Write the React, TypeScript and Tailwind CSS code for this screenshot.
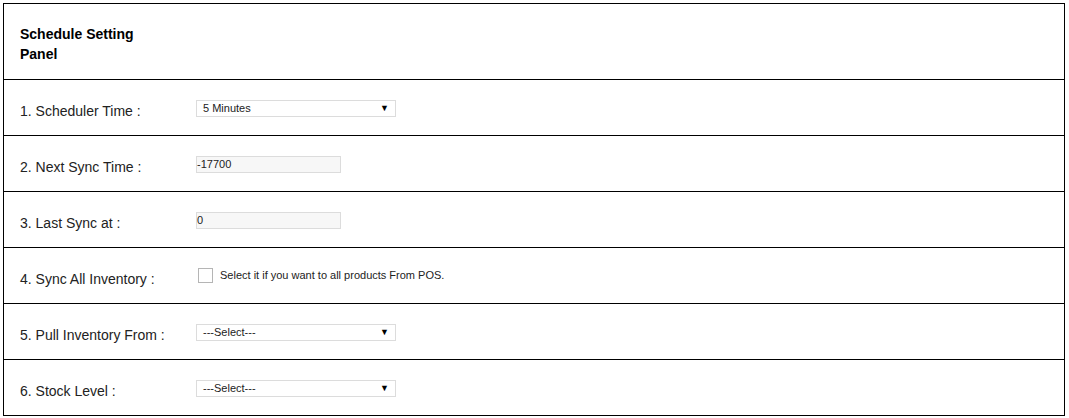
const rows = [
  { label: "1. Scheduler Time :", kind: "select", value: "5 Minutes" },
  { label: "2. Next Sync Time :", kind: "text", value: "-17700" },
  { label: "3. Last Sync at :", kind: "text", value: "0" },
  { label: "4. Sync All Inventory :", kind: "check", value: "Select it if you want to all products From POS." },
  { label: "5. Pull Inventory From :", kind: "select", value: "---Select---" },
  { label: "6. Stock Level :", kind: "select", value: "---Select---" },
];

function Field({ kind, value }: { kind: string; value: string }) {
  if (kind === "select") {
    return (
      <div className="mt-[2px] flex h-[17px] w-[200px] items-center justify-between border border-[#dcdcdc] bg-white pl-[6px] pr-[6px] text-[11px] text-[#222]">
        <span>{value}</span>
        <span className="text-[9px] leading-none text-black">▼</span>
      </div>
    );
  }
  if (kind === "text") {
    return (
      <div className="mt-[2px] flex h-[17px] w-[145px] items-center border border-[#dcdcdc] bg-[#f7f7f7] text-[11px] text-[#222]">
        {value}
      </div>
    );
  }
  return (
    <div className="flex items-center gap-[7px] pl-[2px]">
      <div className="h-[15px] w-[15px] border border-[#b5b5b5] bg-white" />
      <span className="text-[11px] text-[#222]">{value}</span>
    </div>
  );
}

export default function App() {
  return (
    <div className="min-h-screen bg-white font-['Liberation_Sans',Arial,sans-serif]">
      <div className="ml-[3px] pt-[3px]">
        <div className="w-[1062px] border-x border-t border-black">
          <div className="h-[76px] border-b border-black pl-[16px] pt-[20px]">
            <h2 className="w-[130px] text-[14px] font-bold leading-[20px] text-black">
              Schedule Setting Panel
            </h2>
          </div>
          {rows.map((row) => (
            <div key={row.label} className="flex h-[56px] items-center border-b border-black">
              <div className="w-[192px] pl-[16px] pt-[8px] text-[14px] text-[#222]">{row.label}</div>
              <Field kind={row.kind} value={row.value} />
            </div>
          ))}
        </div>
      </div>
    </div>
  );
}
